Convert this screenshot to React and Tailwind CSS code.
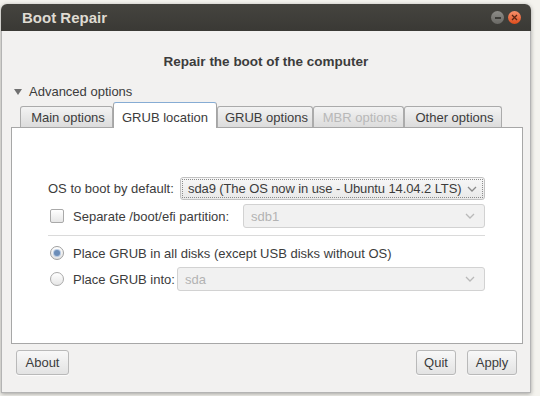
import React from 'react';

// small down chevron used in the combo boxes
function Chevron({ light }) {
  return (
    <svg width="10" height="6" viewBox="0 0 10 6" className="shrink-0">
      <polyline points="1,1 5,5 9,1" fill="none" stroke={light ? '#b9b9b9' : '#8a8a8a'} strokeWidth="1.3" />
    </svg>
  );
}

function Combo({ text, disabled, focused, className }) {
  if (focused) {
    return (
      <div className={`h-[23px] rounded-[3px] border border-[#c2c2c2] bg-gradient-to-b from-[#f7f7f7] to-[#e9e9e9] p-[1px] ${className}`}>
        <div className="h-full flex items-center justify-between border border-dotted border-[#8c8c8c] pl-[5px] pr-[5px]">
          <span className="text-[#3c3c3c] whitespace-nowrap tracking-[-0.1px]">{text}</span>
          <Chevron />
        </div>
      </div>
    );
  }
  return (
    <div className={`h-[24px] rounded-[3px] border ${disabled ? 'border-[#d2d2d2] bg-[#f1f1f1]' : 'border-[#b8b8b8] bg-white'} flex items-center justify-between pl-[7px] pr-[9px] ${className}`}>
      <span className={disabled ? 'text-[#b3b3b3]' : 'text-[#3c3c3c]'}>{text}</span>
      <Chevron light={disabled} />
    </div>
  );
}

function Tab({ label, width, active, disabled }) {
  if (active) {
    return (
      <div className={`${width} h-[26px] -mb-px relative z-10 flex items-center justify-center pt-[4px] bg-white border border-b-0 border-[#a5a5a5] border-t-[#86acd4] rounded-t-[3px]`}>
        <span className="text-[#3c3c3c]">{label}</span>
      </div>
    );
  }
  return (
    <div className={`${width} h-[21px] flex items-center justify-center pl-[3px] bg-gradient-to-b from-[#f3f3f3] to-[#dcdcdc] border border-b-0 border-[#ababab] rounded-t-[3px]`}>
      <span className={disabled ? 'text-[#b8b8b8]' : 'text-[#3c3c3c]'}>{label}</span>
    </div>
  );
}

function Button({ label, width }) {
  return (
    <div className={`${width} h-[25px] flex items-center justify-center rounded-[3px] border border-[#b9b9b9] bg-gradient-to-b from-[#f8f8f8] to-[#e3e3e3] shadow-[0_1px_0_rgba(255,255,255,0.8)] text-[#3c3c3c]`}>
      {label}
    </div>
  );
}

export default function App() {
  return (
    <div className="w-[540px] h-[396px] bg-[#f4f3ee] pt-[4px] pl-[1px] overflow-hidden text-[13px] leading-[17px] font-['Liberation_Sans',Arial,sans-serif]">
      <div className="w-[530px] flex flex-col rounded-t-[6px] shadow-[0_1px_4px_rgba(0,0,0,0.35)]">
        {/* title bar */}
        <div className="h-[27px] rounded-t-[6px] bg-gradient-to-b from-[#45443f] to-[#3a3935] flex items-center justify-between pl-[21px] pr-[10px]">
          <span className="text-[15px] font-bold text-[#dfdbd2] leading-[18px]">Boot Repair</span>
          <div className="flex items-center gap-[4px]">
            <div className="w-[13px] h-[13px] rounded-full bg-gradient-to-b from-[#8d8c88] to-[#6a6965] flex items-center justify-center">
              <div className="w-[6px] h-[2px] bg-[#3e3d39]" />
            </div>
            <div className="w-[13px] h-[13px] rounded-full bg-gradient-to-b from-[#f7906a] to-[#de4b17] flex items-center justify-center">
              <svg width="7" height="7" viewBox="0 0 7 7">
                <path d="M1 1 L6 6 M6 1 L1 6" stroke="#5b2512" strokeWidth="1.3" />
              </svg>
            </div>
          </div>
        </div>

        {/* window body */}
        <div className="h-[362px] bg-[#f2f1f0] border-x border-b border-[#b4b4b4] flex flex-col">
          <div className="pt-[22px] text-center font-bold text-[13.5px] text-[#3c3c3c]">Repair the boot of the computer</div>

          <div className="mt-[13px] pl-[12px] flex items-center gap-[7px] text-[#3c3c3c]">
            <svg width="8" height="6" viewBox="0 0 8 6">
              <polygon points="0,0 8,0 4,6" fill="#707070" />
            </svg>
            <span>Advanced options</span>
          </div>

          {/* tabs + panel */}
          <div className="mt-[2px] ml-[9px] w-[512px] flex flex-col">
            <div className="flex items-end pl-[9px]">
              <Tab label="Main options" width="w-[93px]" />
              <Tab label="GRUB location" width="w-[104px]" active />
              <Tab label="GRUB options" width="w-[96px]" />
              <Tab label="MBR options" width="w-[91px]" disabled />
              <Tab label="Other options" width="w-[98px]" />
            </div>

            <div className="h-[217px] bg-white border border-[#a7a7a7] pl-[36px] pr-[37px] flex flex-col text-[#3c3c3c]">
              <div className="mt-[49px] flex items-center">
                <span className="w-[132px] shrink-0 whitespace-nowrap">OS to boot by default:</span>
                <Combo focused text="sda9 (The OS now in use - Ubuntu 14.04.2 LTS)" className="flex-1" />
              </div>

              <div className="mt-[4px] flex items-center">
                <div className="w-[14px] h-[14px] ml-[2px] shrink-0 rounded-[2px] border border-[#a9a9a9] bg-gradient-to-b from-white to-[#e6e6e6]" />
                <span className="ml-[9px] w-[170px] shrink-0 whitespace-nowrap">Separate /boot/efi partition:</span>
                <Combo disabled text="sdb1" className="flex-1" />
              </div>

              <div className="mt-[7px] h-px bg-[#dadada]" />

              <div className="mt-[5px] h-[24px] flex items-center">
                <div className="w-[14px] h-[14px] ml-[2px] rounded-full border border-[#9f9f9f] bg-gradient-to-b from-white to-[#e3e3e3] flex items-center justify-center">
                  <div className="w-[6px] h-[6px] rounded-full bg-[#6b8db8] shadow-[0_0_0_1px_rgba(150,180,220,0.6)]" />
                </div>
                <span className="ml-[9px] whitespace-nowrap">Place GRUB in all disks (except USB disks without OS)</span>
              </div>

              <div className="mt-[2px] flex items-center">
                <div className="w-[14px] h-[14px] ml-[2px] shrink-0 rounded-full border border-[#a9a9a9] bg-gradient-to-b from-white to-[#e6e6e6]" />
                <span className="ml-[9px] w-[104px] shrink-0 whitespace-nowrap">Place GRUB into:</span>
                <Combo disabled text="sda" className="flex-1" />
              </div>
            </div>
          </div>

          {/* bottom buttons */}
          <div className="mt-[6px] ml-[14px] mr-[13px] flex items-center">
            <Button label="About" width="w-[53px]" />
            <div className="flex-1" />
            <Button label="Quit" width="w-[40px]" />
            <div className="w-[11px]" />
            <Button label="Apply" width="w-[50px]" />
          </div>
        </div>
      </div>
    </div>
  );
}
